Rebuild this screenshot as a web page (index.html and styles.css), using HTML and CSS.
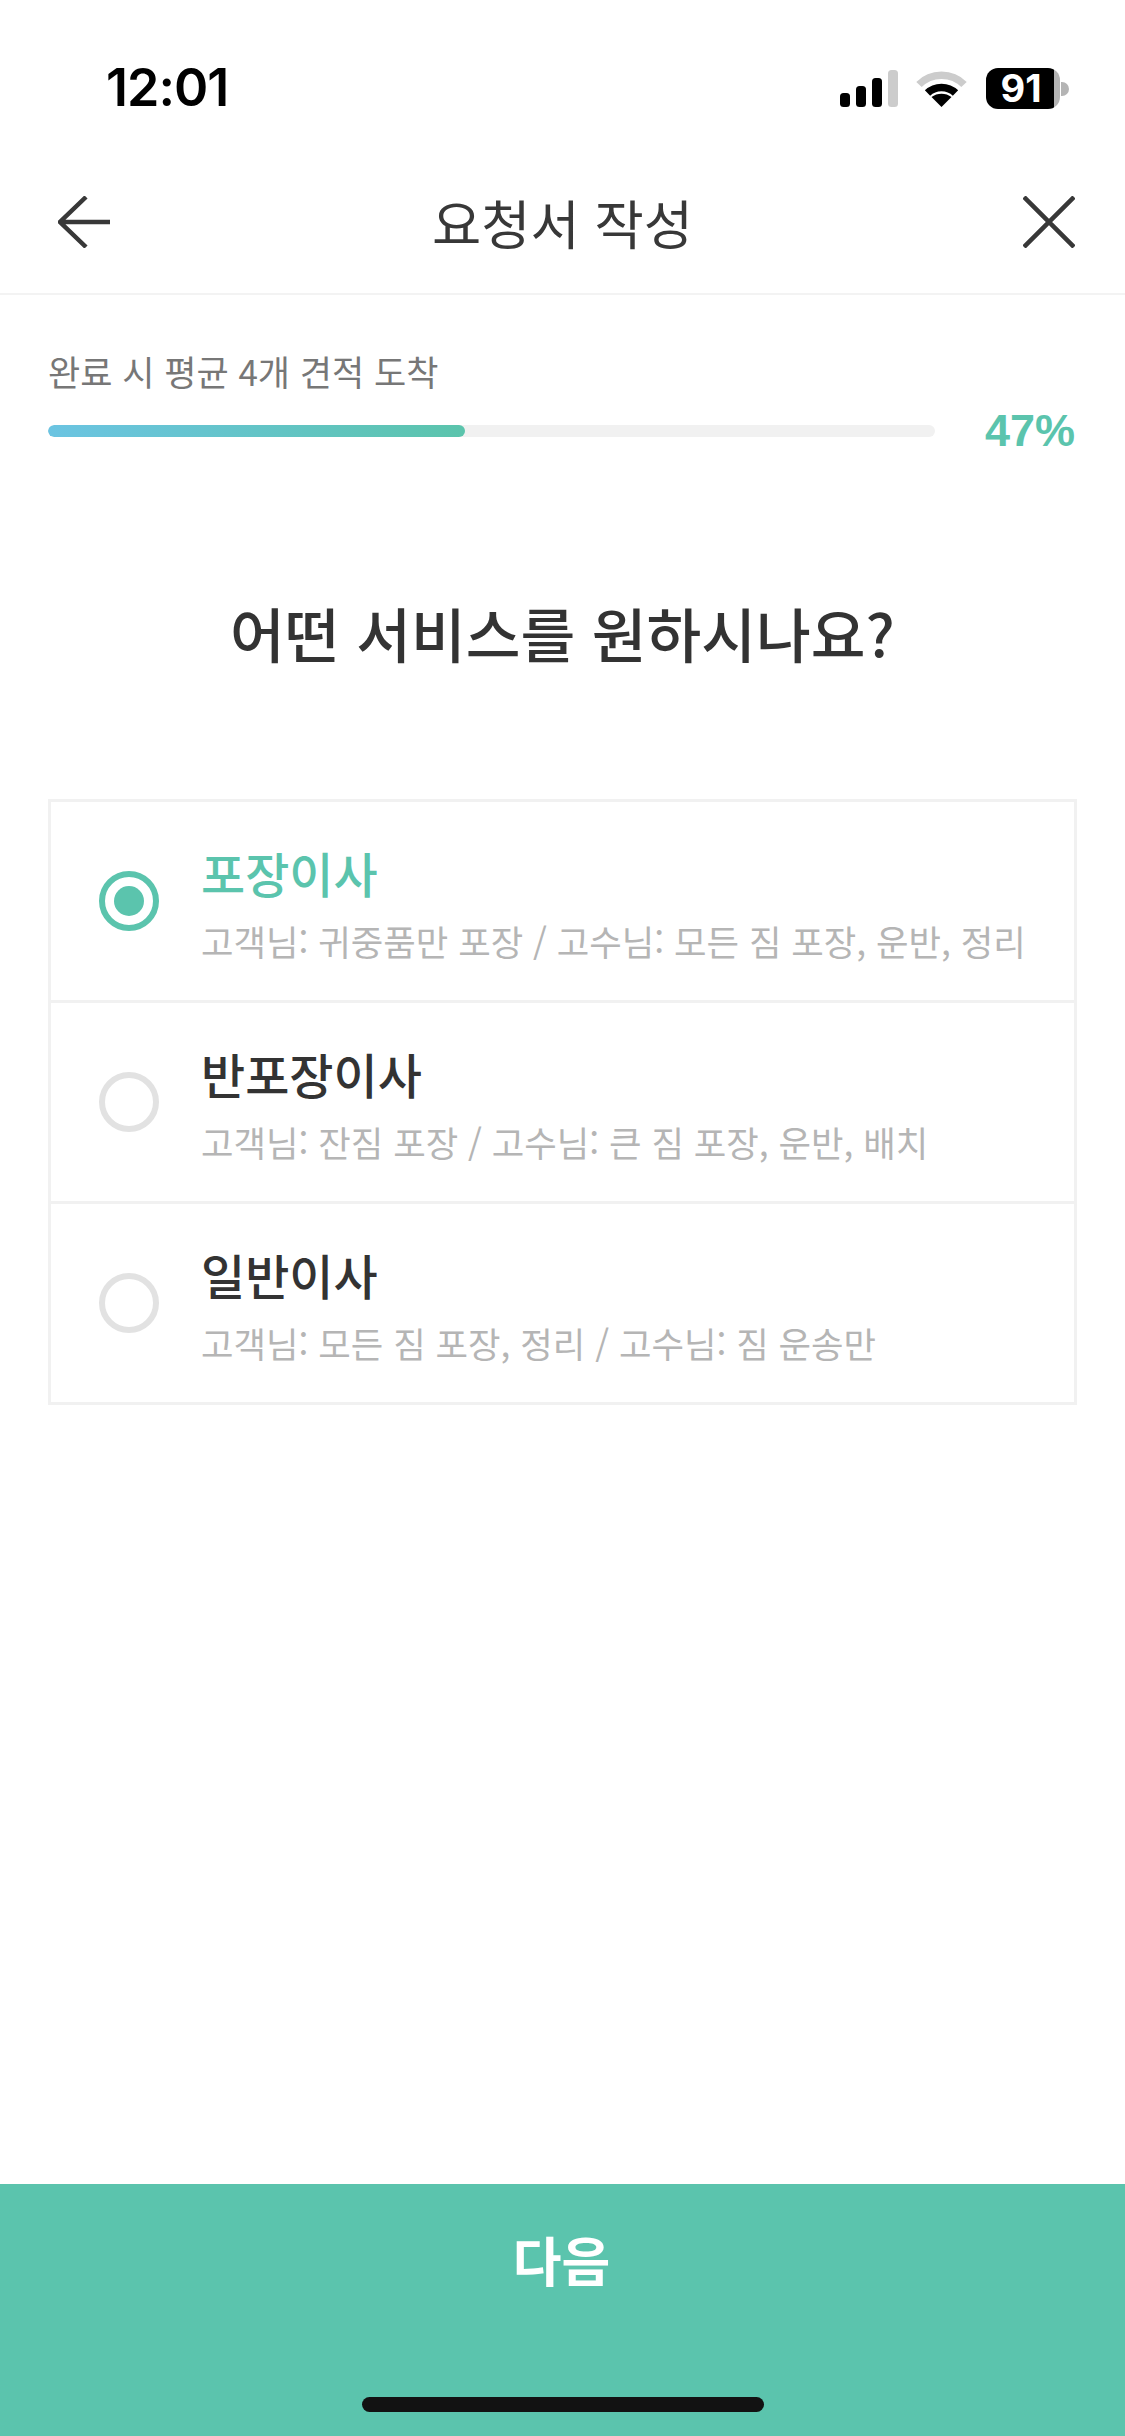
FILE: index.html
```html
<!DOCTYPE html>
<html lang="ko">
<head>
<meta charset="utf-8">
<title>요청서 작성</title>
<link rel="stylesheet" href="styles.css">
</head>
<body>
<div class="page">
  <div class="status">
    <span class="time">12:01</span>
    <div class="status-icons">
      <svg class="signal" width="58" height="37" viewBox="0 0 58 37">
        <rect x="0" y="23" width="10" height="14" rx="3.5" fill="#000"/>
        <rect x="16" y="16" width="10" height="21" rx="3.5" fill="#000"/>
        <rect x="32" y="8" width="10" height="29" rx="3.5" fill="#000"/>
        <rect x="48" y="0" width="10" height="37" rx="3.5" fill="#ccc"/>
      </svg>
      <svg class="wifi" width="51" height="37" viewBox="0 0 51 37">
        <path d="M3 14.5C15 2 36 2 48 14.5" fill="none" stroke="#ccc" stroke-width="7.5"/>
        <path d="M11.5 23C19 15.5 32 15.5 39.5 23" fill="none" stroke="#000" stroke-width="7.5"/>
        <path d="M25.5 37L15.5 27C21 22.5 30 22.5 35.5 27Z" fill="#000"/>
      </svg>
      <div class="battery-wrap">
        <div class="battery">91</div>
        <span class="battery-cap"></span>
      </div>
    </div>
  </div>

  <header class="nav">
    <svg width="52" height="52" viewBox="0 0 52 52" fill="none" stroke="#383838" stroke-width="4.5">
      <path d="M28 1L2 26L28 51M2 26H52"/>
    </svg>
    <h1 class="nav-title">요청서 작성</h1>
    <svg width="52" height="52" viewBox="0 0 52 52" fill="none" stroke="#383838" stroke-width="4.5">
      <path d="M1 1L51 51M51 1L1 51"/>
    </svg>
  </header>

  <section class="progress">
    <p class="progress-label">완료 시 평균 4개 견적 도착</p>
    <div class="progress-row">
      <div class="track"><div class="fill" style="width:47%"></div></div>
      <span class="percent">47%</span>
    </div>
  </section>

  <h2 class="question">어떤 서비스를 원하시나요?</h2>

  <ul class="options">
    <li class="option selected">
      <span class="radio"></span>
      <div class="option-text">
        <div class="option-title">포장이사</div>
        <div class="option-sub">고객님: 귀중품만 포장 / 고수님: 모든 짐 포장, 운반, 정리</div>
      </div>
    </li>
    <li class="option">
      <span class="radio"></span>
      <div class="option-text">
        <div class="option-title">반포장이사</div>
        <div class="option-sub">고객님: 잔짐 포장 / 고수님: 큰 짐 포장, 운반, 배치</div>
      </div>
    </li>
    <li class="option">
      <span class="radio"></span>
      <div class="option-text">
        <div class="option-title">일반이사</div>
        <div class="option-sub">고객님: 모든 짐 포장, 정리 / 고수님: 짐 운송만</div>
      </div>
    </li>
  </ul>

  <footer class="next">
    <span class="next-label">다음</span>
    <span class="home"></span>
  </footer>
</div>
</body>
</html>
```

FILE: styles.css
```css
* { box-sizing: border-box; }
html, body { margin: 0; padding: 0; background: #fff; }
body { font-family: "Noto Sans CJK KR", "Noto Sans", sans-serif; color: #333; }
.page { width: 1125px; height: 2436px; display: flex; flex-direction: column; overflow: hidden; }

.status { height: 171px; padding: 68px 56px 0 106px; display: flex; justify-content: space-between; align-items: flex-start; flex: none; }
.time { font-family: Inter, sans-serif; font-weight: 600; font-size: 52px; line-height: 40px; letter-spacing: -1px; color: #000; }
.status-icons { display: flex; align-items: flex-start; }
.signal { margin-top: 2px; }
.wifi { margin: 2px 0 0 18px; }
.battery-wrap { display: flex; align-items: center; margin-left: 19px; }
.battery { width: 74px; height: 41px; border-radius: 12px; background: linear-gradient(90deg, #000 92%, #b4b4b4 92%); color: #fff; font-family: Inter, sans-serif; font-weight: 700; font-size: 38px; line-height: 41px; text-align: center; padding-right: 4px; }
.battery-cap { width: 8px; height: 14px; margin-left: 1px; background: #b4b4b4; border-radius: 0 7px 7px 0; }

.nav { height: 124px; padding: 0 50px 21px 58px; display: flex; justify-content: space-between; align-items: center; border-bottom: 2px solid #f3f3f3; flex: none; }
.nav-title { margin: 0 8px 0 0; font-size: 53.5px; font-weight: 400; line-height: 60px; color: #383838; }

.progress { padding: 51px 48px 0; flex: none; }
.progress-label { margin: 0; font-size: 35px; line-height: 50px; color: #777; }
.progress-row { display: flex; align-items: center; height: 50px; margin-top: 10px; }
.track { width: 887px; height: 12px; border-radius: 6px; background: #f1f1f1; overflow: hidden; }
.fill { height: 100%; border-radius: 6px; background: linear-gradient(90deg, #6bc4e2, #5bc4ac); }
.percent { margin-left: auto; margin-right: 2px; font-family: "Liberation Sans", Arial, sans-serif; font-weight: 700; font-size: 45px; line-height: 50px; color: #5bc4ad; }

.question { margin: 136px 0 0; text-align: center; font-size: 59.5px; font-weight: 500; line-height: 80px; color: #333; flex: none; }

.options { list-style: none; margin: 127px 48px 0; padding: 0; border: 3px solid #f1f1f1; flex: none; }
.option { height: 201px; display: flex; align-items: center; padding-left: 48px; border-top: 3px solid #f1f1f1; }
.option:first-child { height: 198px; border-top: 0; }
.radio { width: 60px; height: 60px; border-radius: 50%; border: 6px solid #e2e2e2; flex: none; display: flex; align-items: center; justify-content: center; }
.selected .radio { border-color: #5bc4ad; }
.selected .radio::after { content: ""; width: 30px; height: 30px; border-radius: 50%; background: #5bc4ad; }
.option-text { margin-left: 42px; padding-top: 5px; }
.option-title { font-size: 48px; font-weight: 500; line-height: 62px; color: #333; }
.selected .option-title { color: #5bc4ad; }
.option-sub { font-size: 35.35px; line-height: 50px; margin-top: 13px; color: #b5b5b5; }

.next { margin-top: auto; height: 252px; background: #5bc4ad; display: flex; flex-direction: column; align-items: center; flex: none; padding-top: 40px; }
.next-label { font-size: 53px; font-weight: 700; line-height: 70px; color: #fff; margin-right: 2px; }
.home { width: 402px; height: 15px; margin-top: 103px; border-radius: 8px; background: #121212; }
```
